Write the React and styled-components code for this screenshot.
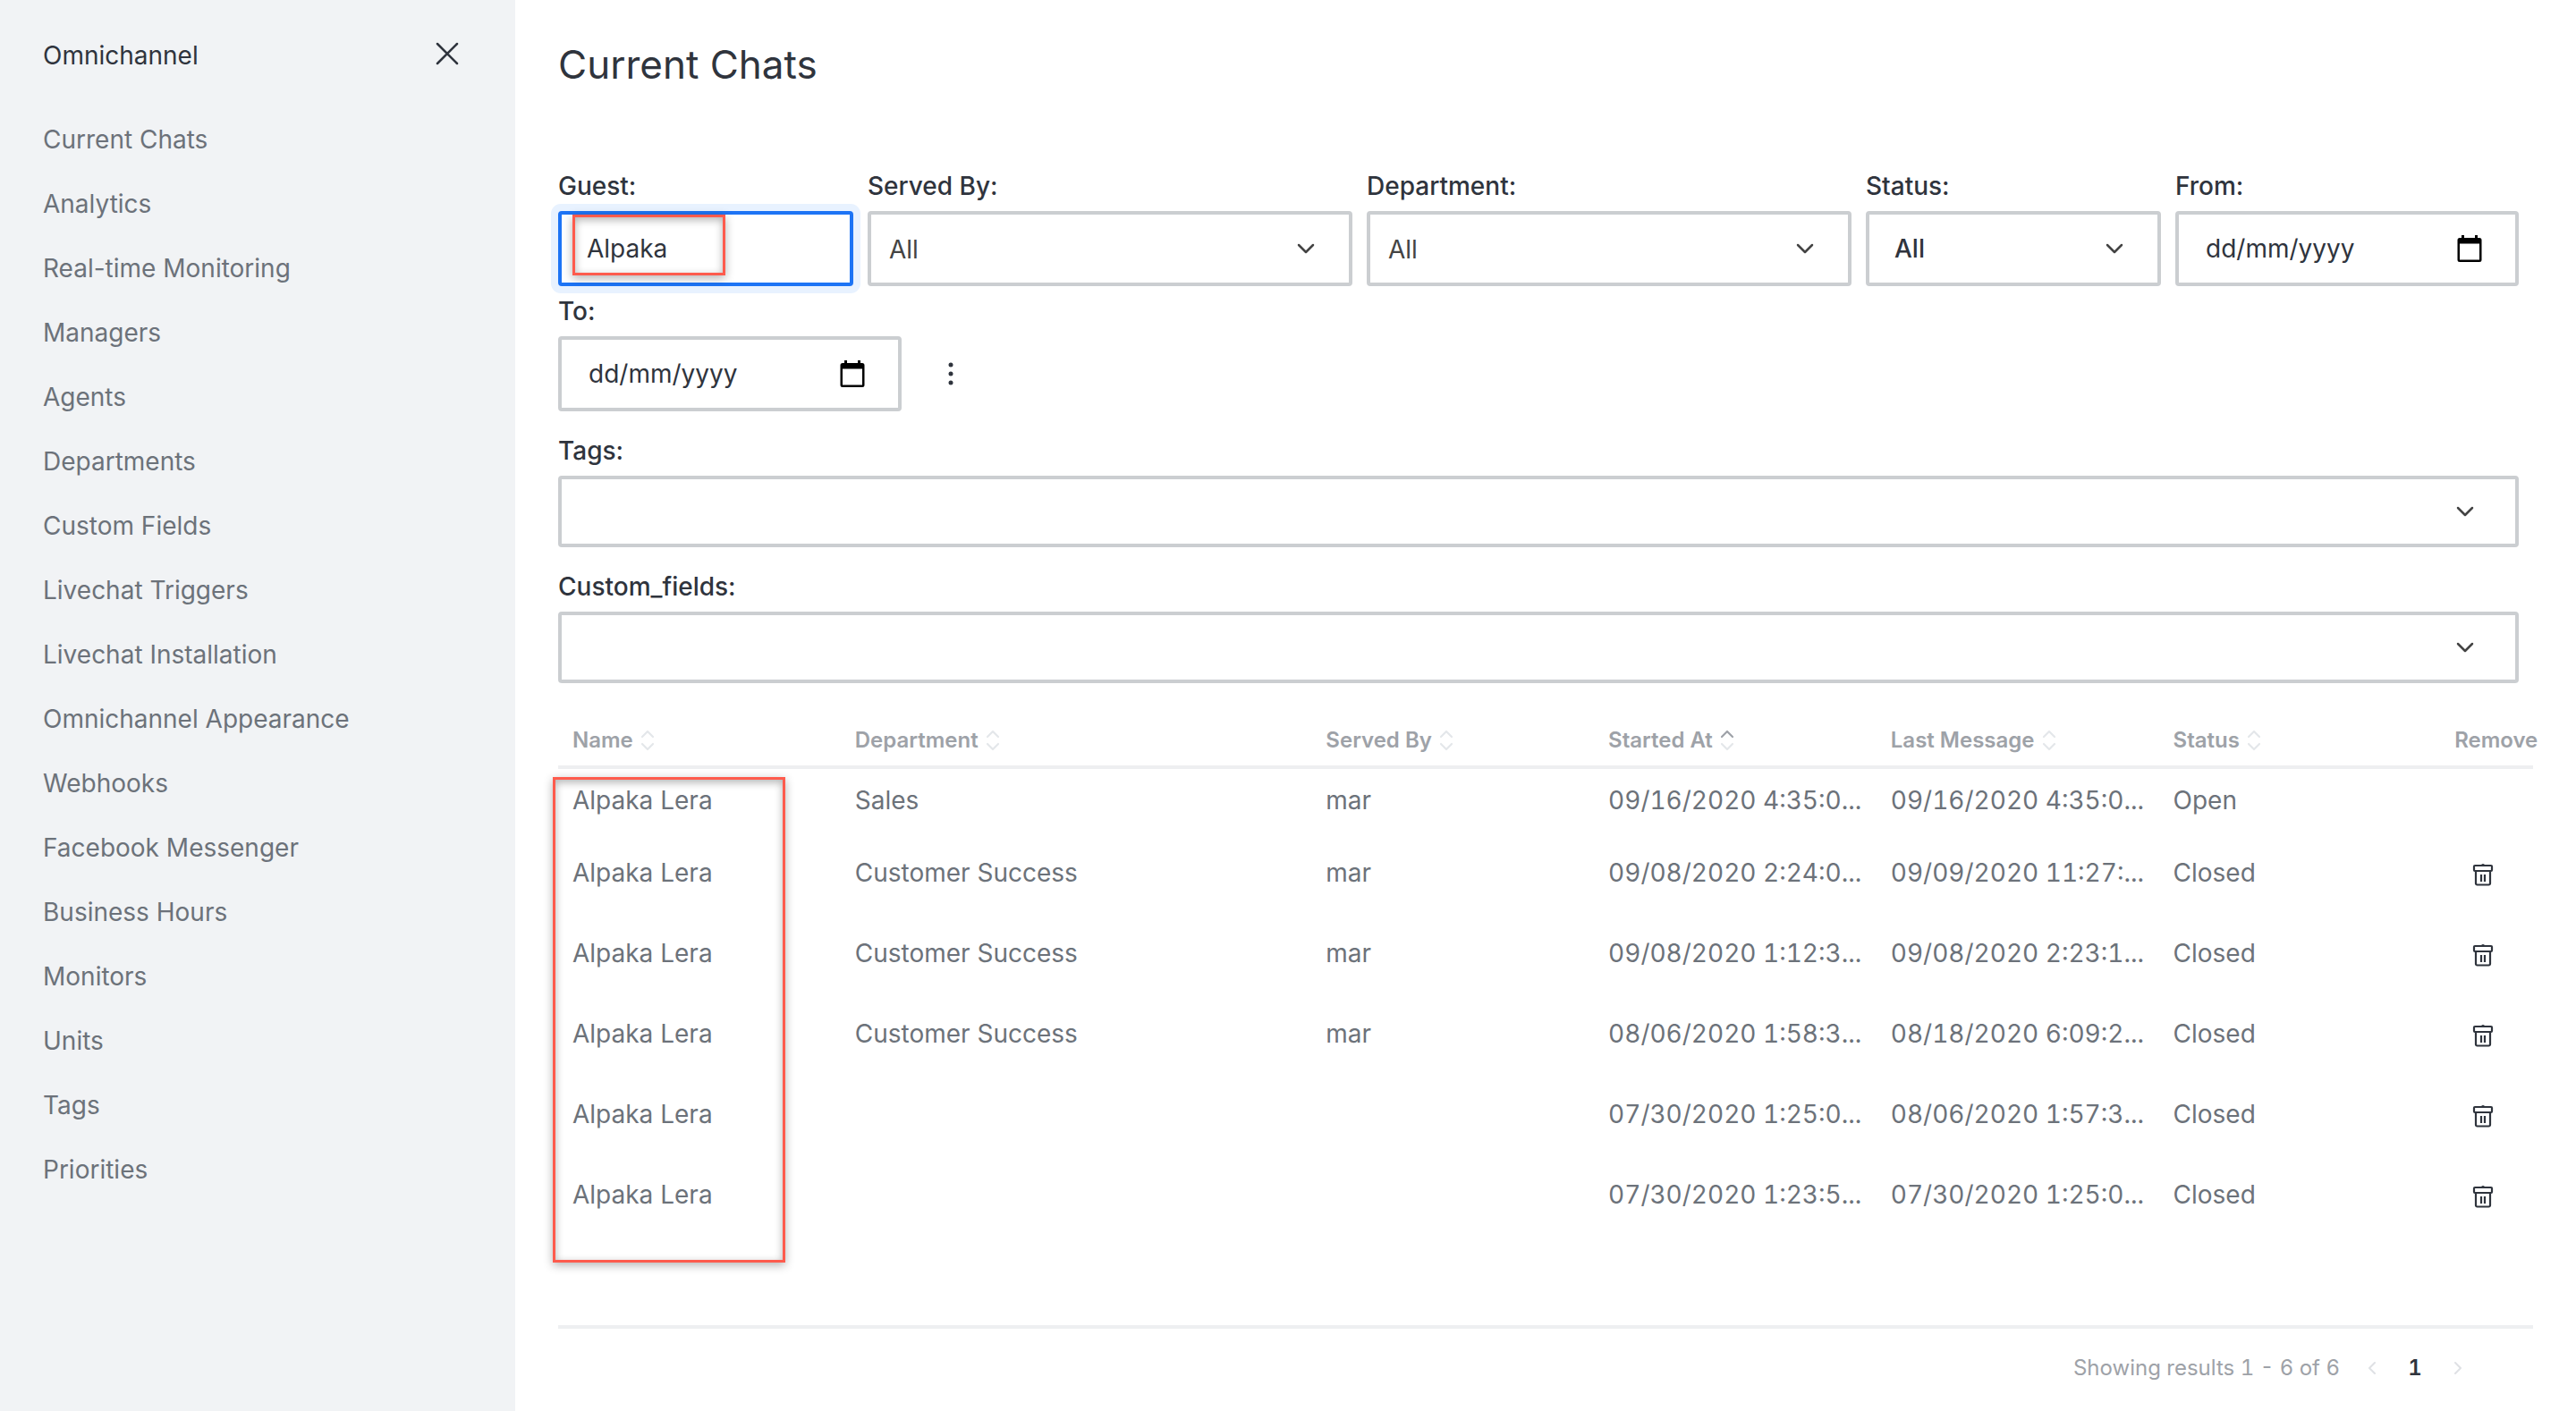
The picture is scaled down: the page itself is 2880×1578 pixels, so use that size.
import React from "react";
import styled, { createGlobalStyle, css } from "styled-components";

const ink = "#2f343d";
const muted = "#6c727a";
const hint = "#9ea2a8";
const line = "#cbced1";
const divider = "#eeeff1";

const GlobalStyle = createGlobalStyle`
  *, *::before, *::after { box-sizing: border-box; }
  body {
    margin: 0;
    background: #fff;
    color: ${ink};
    font-family: Inter, "Liberation Sans", sans-serif;
    font-size: 28px;
    line-height: 40px;
  }
  button, input, select { font: inherit; color: inherit; }
`;

const Layout = styled.div`
  display: flex;
  min-height: 100vh;
`;

const Sidebar = styled.aside`
  flex: 0 0 576px;
  padding: 40px 48px;
  background: #f1f3f5;
`;

const SidebarHeader = styled.header`
  display: flex;
  align-items: center;
  justify-content: space-between;
  padding-right: 8px;
  height: 40px;
`;

const SidebarTitle = styled.h2`
  margin: 0;
  padding-top: 4px;
  font-size: 28px;
  font-weight: 400;
`;

const IconButton = styled.button`
  display: inline-flex;
  align-items: center;
  justify-content: center;
  width: ${(p) => p.$size || 24}px;
  height: ${(p) => p.$size || 24}px;
  padding: 0;
  border: 0;
  background: none;
  color: ${(p) => p.$color || ink};
  cursor: pointer;
`;

const NavList = styled.ul`
  display: flex;
  flex-direction: column;
  gap: 32px;
  margin: 56px 0 0;
  padding: 0;
  list-style: none;
`;

const NavLink = styled.a`
  display: block;
  color: ${muted};
  text-decoration: none;
`;

const Main = styled.main`
  flex: 1;
  min-width: 0;
  padding: 44px 48px 0;
`;

const PageTitle = styled.h1`
  margin: 0 0 88px;
  font-size: 44px;
  font-weight: 400;
  line-height: 56px;
`;

const Filters = styled.form`
  display: flex;
  flex-direction: column;
  gap: 24px;
  margin-right: 16px;
`;

const FilterRow = styled.div`
  display: flex;
  flex-wrap: wrap;
  align-items: flex-end;
  gap: 8px 16px;
`;

const Field = styled.div`
  display: flex;
  flex-direction: column;
  gap: 8px;
  flex: ${(p) => (p.$fixed ? "0 0" : "1 0")} ${(p) => (p.$basis ? `${p.$basis}px` : "auto")};
`;

const Label = styled.label`
  font-weight: 500;
`;

const box = css`
  width: 100%;
  height: ${(p) => p.$height || 84}px;
  border: 4px solid ${line};
  border-radius: 4px;
  background: #fff;
  outline: 0;
`;

const ControlStack = styled.div`
  position: relative;
  display: grid;
  align-items: center;
  > * { grid-area: 1 / 1; }
  > svg, > button { justify-self: end; margin-right: ${(p) => p.$inset}px; }
  > svg { pointer-events: none; }
`;

const TextInput = styled.input`
  ${box}
  padding: 0 28px;
  &::placeholder { color: ${ink}; opacity: 1; }
  ${(p) => p.$active && css`
    border-color: #1d74f5;
    box-shadow: 0 0 0 8px #e8f2ff;
  `}
`;

const DateInput = styled(TextInput)`
  padding: 0 30px;
  font-variant-numeric: tabular-nums;
`;

const Select = styled.select`
  ${box}
  appearance: none;
  padding: ${(p) => (p.$strong ? "0 28px" : "2px 20px 0")};
  font-weight: ${(p) => (p.$strong ? 500 : 400)};
  color: ${(p) => (p.$strong ? ink : "#444")};
`;

const MenuSlot = styled.div`
  display: flex;
  align-items: center;
  justify-content: center;
  width: 78px;
  height: 84px;
`;

const Highlight = styled.span`
  position: absolute;
  border: 3px solid #ff5b4d;
  box-shadow: 0 3px 10px rgba(0, 0, 0, 0.3), inset 0 3px 10px rgba(0, 0, 0, 0.3);
  pointer-events: none;
`;

const GuestHighlight = styled(Highlight)`
  top: 4px;
  left: 16px;
  width: 171px;
  height: 68px;
`;

const NamesHighlight = styled(Highlight)`
  top: 73px;
  bottom: -30px;
  left: -6px;
  width: 260px;
`;

const TableArea = styled.div`
  position: relative;
  margin-top: 32px;
`;

const Table = styled.table`
  width: 100%;
  table-layout: fixed;
  border-collapse: separate;
  border-spacing: 0;
`;

const Col = styled.col`
  width: ${(p) => p.$width || "auto"};
`;

const Th = styled.th`
  height: 64px;
  padding: 4px 16px 0;
  border-bottom: 4px solid ${divider};
  color: ${hint};
  font-size: 24px;
  font-weight: 600;
  line-height: 32px;
  text-align: left;
  white-space: nowrap;
`;

const HeadLabel = styled.span`
  display: inline-flex;
  align-items: center;
  gap: 8px;
`;

const Td = styled.td`
  height: ${(p) => (p.$short ? 72 : 90)}px;
  padding: 0 16px 2px;
  color: ${muted};
  font-variant-numeric: ${(p) => (p.$numeric ? "tabular-nums" : "normal")};
  overflow: hidden;
  text-overflow: ellipsis;
  white-space: nowrap;
`;

const RemoveTd = styled.td`
  padding: 0 20px;
  vertical-align: middle;
  line-height: 0;
`;

const Footer = styled.footer`
  display: flex;
  align-items: center;
  justify-content: flex-end;
  margin-top: 100px;
  padding: 24px 72px 24px 0;
  border-top: 4px solid ${divider};
  color: ${hint};
  font-size: 24px;
  font-variant-numeric: tabular-nums;
`;

const Pager = styled.nav`
  display: flex;
  align-items: center;
  gap: 24px;
  margin-left: 24px;
`;

const PageButton = styled.button`
  width: 24px;
  padding: 0;
  border: 0;
  background: none;
  font-weight: 600;
  color: ${ink};
`;

const Stroke = ({ w, h, d, width = 2.5, color = "currentColor" }) => (
  <svg width={w} height={h} viewBox={`0 0 ${w} ${h}`} fill="none" stroke={color} strokeWidth={width} strokeLinecap="round" strokeLinejoin="round" aria-hidden="true">
    <path d={d} />
  </svg>
);

const Cross = () => <Stroke w={26} h={26} d="M2 2 24 24M24 2 2 24" />;
const ChevronDown = () => <Stroke w={20} h={12} d="M2 2 10 10 18 2" color="#444" />;
const Kebab = () => (
  <svg width="6" height="26" viewBox="0 0 6 26" fill="currentColor" aria-hidden="true">
    <circle cx="3" cy="3" r="2.5" /><circle cx="3" cy="13" r="2.5" /><circle cx="3" cy="23" r="2.5" />
  </svg>
);
const Calendar = () => (
  <svg width="28" height="30" viewBox="0 0 28 30" aria-hidden="true">
    <path fill="#000" fillRule="evenodd" d="M5 0h3v3h12V0h3v3h2a2.500 2.500 0 0 1 2.500 2.500v22A2.500 2.500 0 0 1 25 30H3A2.500 2.500 0 0 1 .5 27.500v-22A2.500 2.500 0 0 1 3 3h2zM3 9.500V27.500h22V9.500z" />
  </svg>
);
const Trash = () => (
  <svg width="24" height="28" viewBox="0 0 24 28" fill="none" stroke="currentColor" strokeWidth="2.200" strokeLinejoin="round" aria-hidden="true">
    <rect x="2" y="5" width="20" height="6" rx="1" />
    <path d="M4 11v14a1.500 1.500 0 0 0 1.500 1.500h13a1.500 1.500 0 0 0 1.500-1.500V11M10 15v8M14 15v8" />
    <path d="M10 5a2 2 0 0 1 4 0z" fill="currentColor" stroke="none" />
  </svg>
);
const SortMark = ({ up }) => (
  <svg width="16" height="24" viewBox="0 0 16 24" fill="none" strokeWidth="2.200" strokeLinecap="round" strokeLinejoin="round" aria-hidden="true">
    <path stroke={up ? hint : "#e4e7ea"} d="M2 8 8 2l6 6" />
    <path stroke="#e4e7ea" d="M2 16l6 6 6-6" />
  </svg>
);

const navItems = [
  "Current Chats", "Analytics", "Real-time Monitoring", "Managers", "Agents", "Departments",
  "Custom Fields", "Livechat Triggers", "Livechat Installation", "Omnichannel Appearance",
  "Webhooks", "Facebook Messenger", "Business Hours", "Monitors", "Units", "Tags", "Priorities",
];

const columns = [
  { name: "Name", width: "14.3%" },
  { name: "Department", width: "23.85%" },
  { name: "Served By", width: "14.3%" },
  { name: "Started At", width: "14.3%", up: true, numeric: true },
  { name: "Last Message", width: "14.3%", numeric: true },
  { name: "Status", width: "14.25%" },
];

const chats = [
  ["Alpaka Lera", "Sales", "mar", "09/16/2020 4:35:0...", "09/16/2020 4:35:0...", "Open"],
  ["Alpaka Lera", "Customer Success", "mar", "09/08/2020 2:24:0...", "09/09/2020 11:27:...", "Closed"],
  ["Alpaka Lera", "Customer Success", "mar", "09/08/2020 1:12:3...", "09/08/2020 2:23:1...", "Closed"],
  ["Alpaka Lera", "Customer Success", "mar", "08/06/2020 1:58:3...", "08/18/2020 6:09:2...", "Closed"],
  ["Alpaka Lera", "", "", "07/30/2020 1:25:0...", "08/06/2020 1:57:3...", "Closed"],
  ["Alpaka Lera", "", "", "07/30/2020 1:23:5...", "07/30/2020 1:25:0...", "Closed"],
];

const SelectField = ({ id, label, basis, strong, height, inset = 42, option = "" }) => (
  <Field $basis={basis}>
    <Label htmlFor={id}>{label}</Label>
    <ControlStack $inset={inset}>
      <Select id={id} $strong={strong} $height={height}><option>{option}</option></Select>
      <ChevronDown />
    </ControlStack>
  </Field>
);

const DateField = ({ id, label }) => (
  <Field $basis={384} $fixed>
    <Label htmlFor={id}>{label}</Label>
    <ControlStack $inset={40}>
      <DateInput id={id} placeholder="dd/mm/yyyy" />
      <IconButton type="button" $size={30} aria-label="Open calendar"><Calendar /></IconButton>
    </ControlStack>
  </Field>
);

export default function App() {
  return (
    <>
      <GlobalStyle />
      <Layout>
        <Sidebar>
          <SidebarHeader>
            <SidebarTitle>Omnichannel</SidebarTitle>
            <IconButton $size={40} aria-label="Close"><Cross /></IconButton>
          </SidebarHeader>
          <nav>
            <NavList>
              {navItems.map((item) => <li key={item}><NavLink href="#">{item}</NavLink></li>)}
            </NavList>
          </nav>
        </Sidebar>
        <Main>
          <PageTitle>Current Chats</PageTitle>
          <Filters>
            <FilterRow>
              <Field $basis={320}>
                <Label htmlFor="guest">Guest:</Label>
                <ControlStack>
                  <TextInput id="guest" defaultValue="Alpaka" $active />
                  <GuestHighlight />
                </ControlStack>
              </Field>
              <SelectField id="served" label="Served By:" basis={532} option="All" />
              <SelectField id="department" label="Department:" basis={532} option="All" />
              <SelectField id="status" label="Status:" basis={320} option="All" strong />
              <DateField id="from" label="From:" />
              <DateField id="to" label="To:" />
              <MenuSlot>
                <IconButton type="button" $size={40} aria-label="More options"><Kebab /></IconButton>
              </MenuSlot>
            </FilterRow>
            <SelectField id="tags" label="Tags:" height={80} inset={50} />
            <SelectField id="custom" label="Custom_fields:" height={80} inset={50} />
          </Filters>
          <TableArea>
            <Table>
              <colgroup>
                {columns.map((c) => <Col key={c.name} $width={c.width} />)}
                <Col />
              </colgroup>
              <thead>
                <tr>
                  {columns.map((c) => (
                    <Th key={c.name}><HeadLabel>{c.name}<SortMark up={c.up} /></HeadLabel></Th>
                  ))}
                  <Th>Remove</Th>
                </tr>
              </thead>
              <tbody>
                {chats.map((row, i) => (
                  <tr key={i}>
                    {row.map((cell, j) => (
                      <Td key={j} $short={i === 0} $numeric={columns[j].numeric}>{cell}</Td>
                    ))}
                    <RemoveTd>
                      {i > 0 && <IconButton $size={56} aria-label="Remove"><Trash /></IconButton>}
                    </RemoveTd>
                  </tr>
                ))}
              </tbody>
            </Table>
            <NamesHighlight />
          </TableArea>
          <Footer>
            <span>Showing results 1 - 6 of 6</span>
            <Pager aria-label="Pages">
              <IconButton $color="#dfe1e5" aria-label="Previous page"><Stroke w={10} h={16} width={2} d="M8 2 2 8 8 14" /></IconButton>
              <PageButton>1</PageButton>
              <IconButton $color="#dfe1e5" aria-label="Next page"><Stroke w={10} h={16} width={2} d="M2 2 8 8 2 14" /></IconButton>
            </Pager>
          </Footer>
        </Main>
      </Layout>
    </>
  );
}
